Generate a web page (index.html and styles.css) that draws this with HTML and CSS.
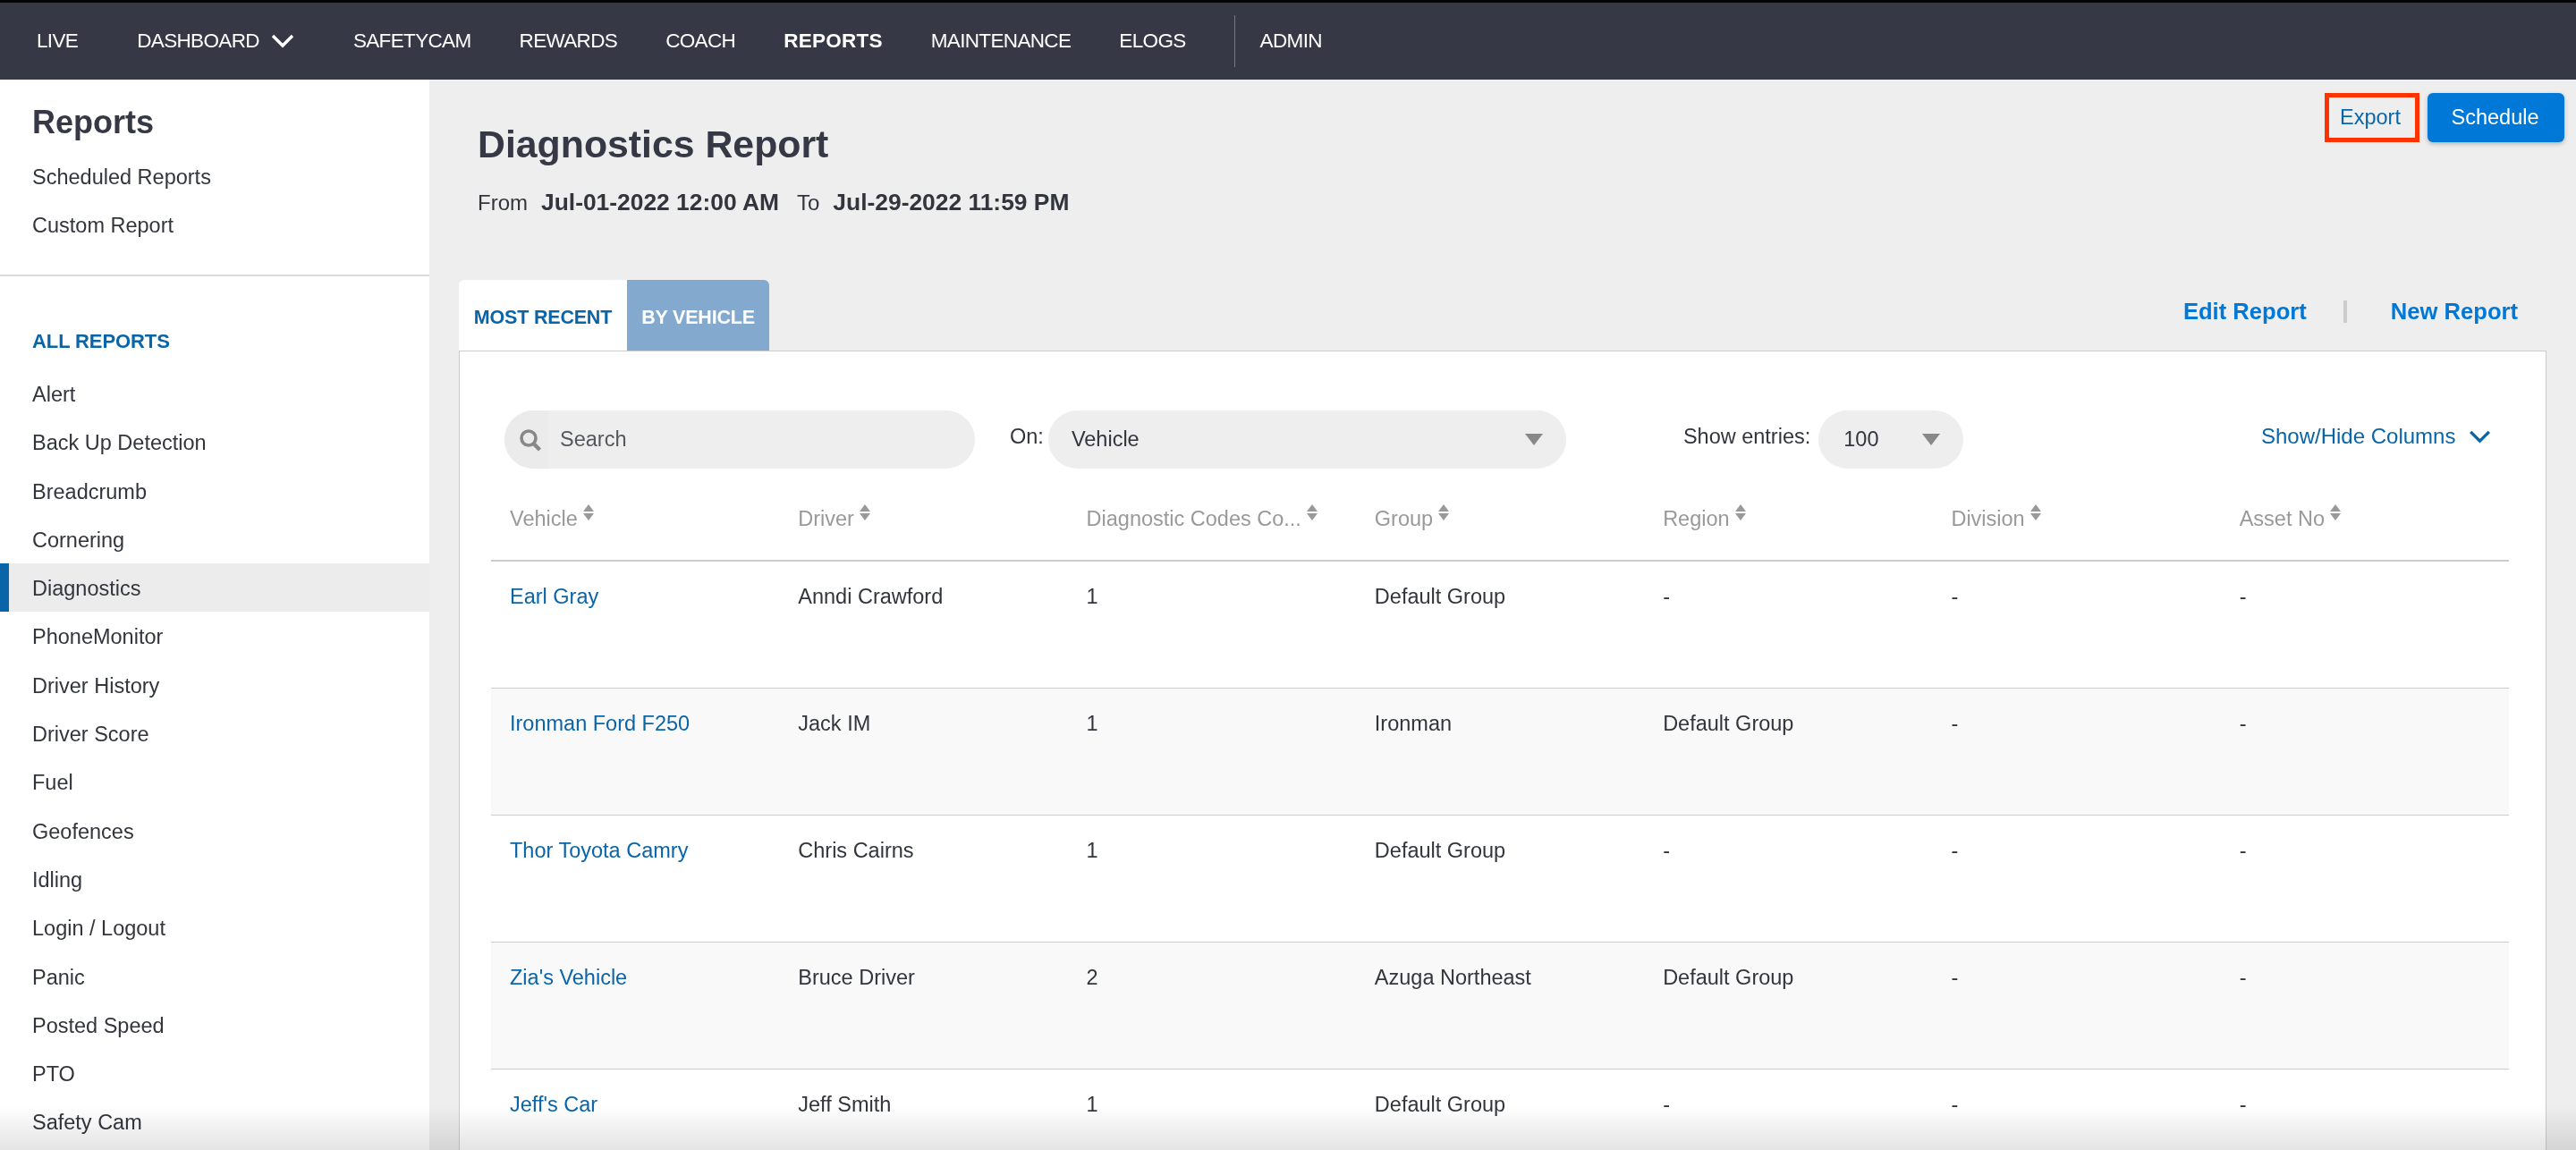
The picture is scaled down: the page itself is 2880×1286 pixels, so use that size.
FILE: index.html
```html
<!DOCTYPE html>
<html lang="en">
<head>
<meta charset="utf-8">
<title>Diagnostics Report</title>
<link rel="stylesheet" href="styles.css">
</head>
<body>
<header class="topnav">
  <a class="nav-live">LIVE</a>
  <a class="nav-dash">DASHBOARD
    <svg class="nav-chevron" viewBox="0 0 26 16"><path d="M2 2l11 11L24 2" fill="none" stroke="#fff" stroke-width="3.4"/></svg>
  </a>
  <a class="nav-item">SAFETYCAM</a>
  <a class="nav-item">REWARDS</a>
  <a class="nav-item">COACH</a>
  <a class="nav-item nav-reports">REPORTS</a>
  <a class="nav-item">MAINTENANCE</a>
  <a class="nav-item">ELOGS</a>
  <span class="nav-sep"></span>
  <a>ADMIN</a>
</header>
<div class="layout">
  <aside class="sidebar">
    <div class="side-top">
      <h2 class="side-title">Reports</h2>
      <a class="side-link">Scheduled Reports</a>
      <a class="side-link">Custom Report</a>
    </div>
    <div class="side-list">
      <h3 class="side-head">ALL REPORTS</h3>
      <a class="side-item">Alert</a>
      <a class="side-item">Back Up Detection</a>
      <a class="side-item">Breadcrumb</a>
      <a class="side-item">Cornering</a>
      <a class="side-item is-active">Diagnostics</a>
      <a class="side-item">PhoneMonitor</a>
      <a class="side-item">Driver History</a>
      <a class="side-item">Driver Score</a>
      <a class="side-item">Fuel</a>
      <a class="side-item">Geofences</a>
      <a class="side-item">Idling</a>
      <a class="side-item">Login / Logout</a>
      <a class="side-item">Panic</a>
      <a class="side-item">Posted Speed</a>
      <a class="side-item">PTO</a>
      <a class="side-item">Safety Cam</a>
    </div>
  </aside>
  <main class="content">
    <div class="actions">
      <a class="btn-export">Export</a>
      <a class="btn-schedule">Schedule</a>
    </div>
    <h1 class="title">Diagnostics Report</h1>
    <p class="range"><span>From</span><b>Jul-01-2022 12:00 AM</b><span class="range-to">To</span><b>Jul-29-2022 11:59 PM</b></p>
    <div class="tabbar">
      <a class="tab tab-on">MOST RECENT</a>
      <a class="tab tab-off">BY VEHICLE</a>
      <div class="report-links">
        <a>Edit Report</a>
        <span class="report-sep"></span>
        <a>New Report</a>
      </div>
    </div>
    <section class="panel">
      <div class="filters">
        <div class="pill pill-search">
          <span class="search-icon">
            <svg viewBox="0 0 26 26" width="26" height="26"><circle cx="11" cy="11" r="8" fill="none" stroke="#888" stroke-width="3.6"/><path d="M16.5 17l7 7" stroke="#888" stroke-width="4.4" fill="none"/></svg>
          </span>
          <span class="search-text">Search</span>
        </div>
        <span class="on-label">On:</span>
        <div class="pill pill-on"><span>Vehicle</span><i class="caret"></i></div>
        <span class="show-label">Show entries:</span>
        <div class="pill pill-show"><span>100</span><i class="caret"></i></div>
        <a class="columns">Show/Hide Columns
          <svg viewBox="0 0 26 16" width="25" height="15"><path d="M2 2l11 11L24 2" fill="none" stroke="#0a65a8" stroke-width="3.6"/></svg>
        </a>
      </div>
      <table class="grid">
        <thead>
          <tr>
            <th>Vehicle<i class="sort"></i></th>
            <th>Driver<i class="sort"></i></th>
            <th>Diagnostic Codes Co...<i class="sort"></i></th>
            <th>Group<i class="sort"></i></th>
            <th>Region<i class="sort"></i></th>
            <th>Division<i class="sort"></i></th>
            <th>Asset No<i class="sort"></i></th>
          </tr>
        </thead>
        <tbody>
          <tr><td><a>Earl Gray</a></td><td>Anndi Crawford</td><td>1</td><td>Default Group</td><td>-</td><td>-</td><td>-</td></tr>
          <tr><td><a>Ironman Ford F250</a></td><td>Jack IM</td><td>1</td><td>Ironman</td><td>Default Group</td><td>-</td><td>-</td></tr>
          <tr><td><a>Thor Toyota Camry</a></td><td>Chris Cairns</td><td>1</td><td>Default Group</td><td>-</td><td>-</td><td>-</td></tr>
          <tr><td><a>Zia's Vehicle</a></td><td>Bruce Driver</td><td>2</td><td>Azuga Northeast</td><td>Default Group</td><td>-</td><td>-</td></tr>
          <tr><td><a>Jeff's Car</a></td><td>Jeff Smith</td><td>1</td><td>Default Group</td><td>-</td><td>-</td><td>-</td></tr>
        </tbody>
      </table>
    </section>
  </main>
</div>
<div class="bottom-fade"></div>
</body>
</html>
```
FILE: styles.css
```css
* { box-sizing: border-box; }
html, body { margin: 0; height: 1286px; overflow: hidden; }
body { font-family: "Liberation Sans", Arial, sans-serif; font-size: 23.5px; color: #33353d; background: #eee; position: relative; }
h1, h2, h3, p { margin: 0; }

.topnav { height: 89px; background: #363945; border-top: 3px solid #050507; display: flex; align-items: center; padding: 0 0 0 41px; color: #fff; font-size: 22.5px; letter-spacing: -.65px; }
.topnav a { display: flex; align-items: center; }
.nav-live { margin-right: 66px; }
.nav-dash { margin-right: 66px; }
.nav-chevron { width: 26px; height: 16px; margin-left: 13px; }
.nav-item { margin-right: 54px; }
.nav-reports { font-weight: 700; letter-spacing: .25px; }
.nav-sep { width: 1px; height: 58px; background: #77797f; margin-right: 28px; }

.layout { display: flex; height: 1197px; overflow: hidden; }
.sidebar { width: 480px; flex: none; background: #fff; }
.side-top { height: 220px; padding: 28px 36px 0; border-bottom: 2px solid #ddd; display: flex; flex-direction: column; }
.side-title { font-size: 36px; font-weight: 700; line-height: 40px; margin-bottom: 14px; color: #363945; }
.side-link { line-height: 54px; }
.side-list { padding-top: 58px; }
.side-head { font-size: 22px; letter-spacing: -.1px; font-weight: 700; color: #0a65a8; line-height: 30px; padding-left: 36px; margin-bottom: 16px; }
.side-item { display: block; height: 54.3px; line-height: 57px; padding-left: 36px; }
.is-active { background: #ececec; border-left: 10px solid #0a65a8; padding-left: 26px; }

.content { flex: 1; padding: 0 33px; position: relative; }
.actions { position: absolute; top: 15px; right: 13px; display: flex; gap: 9px; }
.btn-export { width: 106px; height: 55px; border: 5px solid #ff3300; color: #0a65a8; padding-right: 4px; display: flex; align-items: center; justify-content: center; }
.btn-schedule { width: 153px; height: 55px; background: #0078d7; color: #fff; border-radius: 6px; padding-right: 2px; display: flex; align-items: center; justify-content: center; box-shadow: 0 2px 5px rgba(0,0,0,.25); }

.title { font-size: 42.8px; font-weight: 700; line-height: 50px; padding: 47px 0 0 21px; color: #363945; }
.range { display: flex; align-items: baseline; gap: 15px; font-size: 24px; line-height: 30px; padding: 25px 0 0 21px; }
.range b { font-size: 26.4px; }
.range-to { margin-left: 5px; }

.tabbar { display: flex; align-items: flex-end; height: 79px; margin-top: 71px; }
.tab { height: 79px; display: flex; align-items: center; justify-content: center; font-weight: 700; font-size: 21.5px; letter-spacing: -.2px; padding-top: 5px; }
.tab-on { width: 188px; background: #fff; color: #0a65a8; border-radius: 6px 0 0 0; }
.tab-off { width: 159px; background: #84a9cf; color: #fff; border-radius: 0 6px 0 0; }
.report-links { margin-left: auto; display: flex; align-items: center; height: 79px; padding: 0 32px 8px 0; font-size: 25.6px; font-weight: 700; color: #0078d7; }
.report-sep { width: 4px; height: 25px; background: #ccc; margin: 0 49px 0 41px; }

.panel { background: #fff; border: 1px solid #ccc; border-bottom: 0; height: 900px; padding: 66px 0 0 35px; width: 2334px; }
.filters { display: flex; align-items: center; height: 65px; padding-left: 15px; position: relative; }
.pill { height: 65px; border-radius: 33px; background: #eee; display: flex; align-items: center; }
.pill-search { width: 526px; overflow: hidden; }
.search-icon { width: 49px; height: 65px; background: #ebebeb; display: flex; align-items: center; justify-content: center; padding-left: 8px; flex: none; }
.search-text { color: #55575e; padding-left: 13px; }
.on-label { margin: -6px 5px 0 39px; }
.pill-on { width: 579px; padding: 0 26px; justify-content: space-between; }
.show-label { margin: -6px 9px 0 131px; }
.pill-show { width: 162px; padding: 0 26px 0 28px; justify-content: space-between; }
.caret { width: 0; height: 0; border: 10px solid transparent; border-top: 13px solid #888; border-bottom: 0; }
.columns { position: absolute; left: 1979px; top: 15px; color: #0a65a8; font-size: 24px; display: flex; align-items: center; gap: 15px; white-space: nowrap; }

.grid { border-collapse: collapse; table-layout: fixed; width: 2256px; margin-top: 38px; }
.grid th { height: 65px; text-align: left; font-weight: 400; color: #999; padding: 0 0 28px 21px; border-bottom: 2px solid #ccc; white-space: nowrap; }
.grid td { height: 142px; vertical-align: top; padding: 26px 0 0 21px; border-bottom: 1px solid #ccc; }
.grid tbody tr:nth-child(even) { background: #f9f9f9; }
.grid td a { color: #0a65a8; }
.sort { display: inline-block; width: 0; height: 0; margin-left: 6px; vertical-align: 6px; position: relative; border-left: 6px solid transparent; border-right: 6px solid transparent; border-top: 8px solid #999; }
.sort::before { content: ""; position: absolute; left: -6px; top: -18px; border-left: 6px solid transparent; border-right: 6px solid transparent; border-bottom: 8px solid #999; }

.bottom-fade { position: absolute; left: 0; right: 0; bottom: 0; height: 50px; background: linear-gradient(to bottom, #fff, #e4e4e4); mix-blend-mode: multiply; pointer-events: none; }
```
